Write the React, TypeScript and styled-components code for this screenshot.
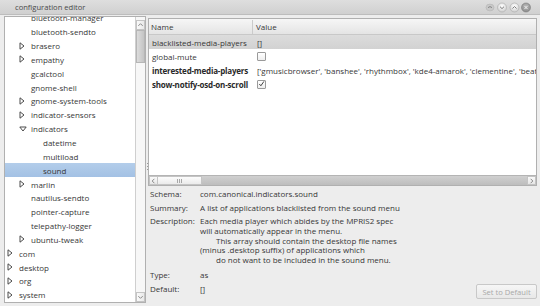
import React from "react";
import styled, { createGlobalStyle } from "styled-components";

const GlobalStyle = createGlobalStyle`
  html, body {
    margin: 0;
    padding: 0;
    background: #ededed;
  }
  body {
    font-family: "Open Sans", "Noto Sans", sans-serif;
    font-size: 8px;
    color: #373737;
  }
`;

type TreeItem = {
  label: string;
  depth: number;
  expander?: "open" | "closed";
  selected?: boolean;
};

const treeItems: TreeItem[] = [
  { label: "bluetooth-manager", depth: 1 },
  { label: "bluetooth-sendto", depth: 1 },
  { label: "brasero", depth: 1, expander: "closed" },
  { label: "empathy", depth: 1, expander: "closed" },
  { label: "gcalctool", depth: 1 },
  { label: "gnome-shell", depth: 1 },
  { label: "gnome-system-tools", depth: 1, expander: "closed" },
  { label: "indicator-sensors", depth: 1, expander: "closed" },
  { label: "indicators", depth: 1, expander: "open" },
  { label: "datetime", depth: 2 },
  { label: "multiload", depth: 2 },
  { label: "sound", depth: 2, selected: true },
  { label: "marlin", depth: 1, expander: "closed" },
  { label: "nautilus-sendto", depth: 1 },
  { label: "pointer-capture", depth: 1 },
  { label: "telepathy-logger", depth: 1 },
  { label: "ubuntu-tweak", depth: 1, expander: "closed" },
  { label: "com", depth: 0, expander: "closed" },
  { label: "desktop", depth: 0, expander: "closed" },
  { label: "org", depth: 0, expander: "closed" },
  { label: "system", depth: 0, expander: "closed" },
];

type KeyRow = {
  name: string;
  bold?: boolean;
  value?: string;
  check?: "on" | "off";
  highlighted?: boolean;
};

const keys: KeyRow[] = [
  { name: "blacklisted-media-players", value: "[]", highlighted: true },
  { name: "global-mute", check: "off" },
  {
    name: "interested-media-players",
    bold: true,
    value:
      "['gmusicbrowser', 'banshee', 'rhythmbox', 'kde4-amarok', 'clementine', 'beatbox', 'guayadeque']",
  },
  { name: "show-notify-osd-on-scroll", bold: true, check: "on" },
];

const description = [
  { text: "Each media player which abides by the MPRIS2 spec", indent: false },
  { text: "will automatically appear in the menu.", indent: false },
  { text: "This array should contain the desktop file names", indent: true },
  { text: "(minus .desktop suffix) of applications which", indent: false },
  { text: "do not want to be included in the sound menu.", indent: true },
];

const Expander = ({ kind }: { kind?: "open" | "closed" }) => (
  <ExpanderBox>
    {kind === "closed" && (
      <svg width="6" height="8" viewBox="0 0 6 8">
        <path d="M1 0.8 L5 4 L1 7.2 Z" fill="#fff" stroke="#4a4a4a" strokeWidth="1" strokeLinejoin="round" />
      </svg>
    )}
    {kind === "open" && (
      <svg width="8" height="6" viewBox="0 0 8 6">
        <path d="M0.8 1 L7.2 1 L4 5 Z" fill="#fff" stroke="#4a4a4a" strokeWidth="1" strokeLinejoin="round" />
      </svg>
    )}
  </ExpanderBox>
);

const Arrow = ({ dir }: { dir: "up" | "down" | "left" | "right" }) => {
  const d = {
    up: "M1.5 5 L4 2.5 L6.5 5",
    down: "M1.5 3 L4 5.5 L6.5 3",
    left: "M5 1.5 L2.5 4 L5 6.5",
    right: "M3 1.5 L5.5 4 L3 6.5",
  }[dir];
  return (
    <svg width="8" height="8" viewBox="0 0 8 8">
      <path d={d} fill="none" stroke="#7a7a7a" strokeWidth="1" />
    </svg>
  );
};

const WindowButtons = () => (
  <svg width="46" height="11" viewBox="0 0 46 11">
    <defs>
      <radialGradient id="wb" cx="50%" cy="35%" r="60%">
        <stop offset="0" stopColor="#ffffff" />
        <stop offset="1" stopColor="#d2d2d2" />
      </radialGradient>
      <radialGradient id="wbd" cx="50%" cy="35%" r="60%">
        <stop offset="0" stopColor="#b8b8b8" />
        <stop offset="1" stopColor="#8e8e8e" />
      </radialGradient>
    </defs>
    <ellipse cx="5" cy="5.5" rx="4" ry="3.4" fill="#c9c9c9" stroke="#b4b4b4" strokeWidth="0.6" />
    <path d="M3 5.6 Q5 3.6 7 5.6" fill="none" stroke="#7d7d7d" strokeWidth="0.9" />
    <circle cx="17" cy="5.5" r="4.5" fill="url(#wb)" stroke="#aaaaaa" strokeWidth="0.6" />
    <path d="M15 4.7 L17 6.6 L19 4.7" fill="none" stroke="#707070" strokeWidth="0.9" />
    <circle cx="29.5" cy="5.5" r="4.5" fill="url(#wb)" stroke="#aaaaaa" strokeWidth="0.6" />
    <path d="M27.5 6.5 L29.5 4.5 L31.5 6.5" fill="none" stroke="#707070" strokeWidth="0.9" />
    <circle cx="41" cy="5.5" r="4.5" fill="url(#wbd)" stroke="#7c7c7c" strokeWidth="0.6" />
    <path d="M39.3 3.8 L42.7 7.2 M42.7 3.8 L39.3 7.2" stroke="#f0f0f0" strokeWidth="1" />
  </svg>
);

const Check = ({ on }: { on: boolean }) => (
  <CheckBox>
    {on && (
      <svg width="8" height="8" viewBox="0 0 8 8">
        <path d="M1.5 4 L3.3 6 L6.8 1" fill="none" stroke="#3a3a3a" strokeWidth="1.1" />
      </svg>
    )}
  </CheckBox>
);

const App = () => {
  return (
    <Window>
      <GlobalStyle />
      <TitleBar>
        <Title>configuration editor</Title>
        <WindowButtons />
      </TitleBar>
      <Body>
        <TreePane>
          <Tree>
            <TreeList>
              {treeItems.map((item) => (
                <TreeRow key={item.label} $depth={item.depth} $selected={item.selected}>
                  <Expander kind={item.expander} />
                  <TreeLabel>{item.label}</TreeLabel>
                </TreeRow>
              ))}
            </TreeList>
          </Tree>
          <VScroll>
            <ScrollButton>
              <Arrow dir="up" />
            </ScrollButton>
            <VThumb />
            <VTrack />
            <ScrollButton>
              <Arrow dir="down" />
            </ScrollButton>
          </VScroll>
        </TreePane>
        <Handle>
          <Grip />
        </Handle>
        <RightPane>
          <ListBox>
            <HeaderRow>
              <NameHeader>Name</NameHeader>
              <ValueHeader>Value</ValueHeader>
            </HeaderRow>
            {keys.map((k) => (
              <KeyLine key={k.name} $highlighted={k.highlighted}>
                <NameCell $bold={k.bold}>{k.name}</NameCell>
                <ValueCell>
                  {k.check ? <Check on={k.check === "on"} /> : k.value}
                </ValueCell>
              </KeyLine>
            ))}
            <ListFill />
            <HScroll>
              <HButton>
                <Arrow dir="left" />
              </HButton>
              <HThumb>
                <ThumbGrip />
              </HThumb>
              <HTrack />
              <HButton>
                <Arrow dir="right" />
              </HButton>
            </HScroll>
          </ListBox>
          <Details>
            <DetailRow>
              <DetailLabel>Schema:</DetailLabel>
              <DetailValue>com.canonical.indicators.sound</DetailValue>
            </DetailRow>
            <DetailRow>
              <DetailLabel>Summary:</DetailLabel>
              <DetailValue>A list of applications blacklisted from the sound menu</DetailValue>
            </DetailRow>
            <DescriptionRow>
              <DetailLabel>Description:</DetailLabel>
              <DescriptionText>
                {description.map((line) => (
                  <DescLine key={line.text} $indent={line.indent}>
                    {line.text}
                  </DescLine>
                ))}
              </DescriptionText>
            </DescriptionRow>
            <DetailRow $gap={3}>
              <DetailLabel>Type:</DetailLabel>
              <DetailValue>as</DetailValue>
            </DetailRow>
            <FooterRow>
              <DetailLabel>Default:</DetailLabel>
              <DetailValue>[]</DetailValue>
              <DefaultButton disabled>Set to Default</DefaultButton>
            </FooterRow>
          </Details>
        </RightPane>
      </Body>
    </Window>
  );
};

const Window = styled.div`
  width: 540px;
  height: 306px;
  display: flex;
  flex-direction: column;
  background: #ededed;
  overflow: hidden;
`;

const TitleBar = styled.div`
  height: 14px;
  flex-shrink: 0;
  display: flex;
  align-items: center;
  padding: 0 9px 0 15px;
  background: linear-gradient(#dedede, #d0d0d0);
  border-bottom: 1px solid #bdbdbd;
  color: #4a4a4a;
  font-size: 7.6px;
`;

const Title = styled.span`
  flex: 1;
`;

const Body = styled.div`
  flex: 1;
  min-height: 0;
  display: flex;
  padding: 1px 3px 3px 4px;
`;

const TreePane = styled.div`
  width: 142px;
  flex-shrink: 0;
  display: flex;
  border: 1px solid #b0b0b0;
  background: #fff;
  box-sizing: border-box;
`;

const Tree = styled.div`
  flex: 1;
  min-width: 0;
  overflow: hidden;
`;

const TreeList = styled.div`
  margin-top: -6px;
`;

const TreeRow = styled.div<{ $depth: number; $selected?: boolean }>`
  height: 13.85px;
  display: flex;
  align-items: center;
  padding-left: ${(p) => p.$depth * 12}px;
  background: ${(p) => (p.$selected ? "linear-gradient(#b3cdea, #a3c1e4)" : "transparent")};
`;

const ExpanderBox = styled.span`
  width: 12px;
  height: 10px;
  flex-shrink: 0;
  display: flex;
  align-items: center;
  padding-left: 2px;
  box-sizing: border-box;
`;

const TreeLabel = styled.span`
  margin-left: 2px;
  white-space: nowrap;
`;

const VScroll = styled.div`
  width: 10px;
  flex-shrink: 0;
  display: flex;
  flex-direction: column;
  border-left: 1px solid #cfcfcf;
  background: #f7f7f7;
  box-sizing: border-box;
`;

const ScrollButton = styled.div`
  height: 10px;
  display: flex;
  align-items: center;
  justify-content: center;
  background: linear-gradient(90deg, #fafafa, #e9e9e9);
  border: 1px solid #c4c4c4;
  margin-top: 3px;
  box-sizing: border-box;
`;

const VThumb = styled.div`
  height: 33px;
  background: linear-gradient(90deg, #dcdcdc, #c4c4c4);
  border: 1px solid #b6b6b6;
  box-sizing: border-box;
`;

const VTrack = styled.div`
  flex: 1;
`;

const Handle = styled.div`
  width: 2px;
  flex-shrink: 0;
  display: flex;
  align-items: center;
  justify-content: center;
`;

const Grip = styled.div`
  width: 1px;
  height: 8px;
  margin-top: 14px;
  background: repeating-linear-gradient(#9a9a9a 0 1px, transparent 1px 3px);
`;

const RightPane = styled.div`
  flex: 1;
  min-width: 0;
  display: flex;
  flex-direction: column;
`;

const ListBox = styled.div`
  height: 168px;
  margin-top: 2px;
  flex-shrink: 0;
  display: flex;
  flex-direction: column;
  background: #fff;
  border: 1px solid #b0b0b0;
  box-sizing: border-box;
  overflow: hidden;
`;

const HeaderRow = styled.div`
  height: 16px;
  flex-shrink: 0;
  display: flex;
  align-items: center;
  background: linear-gradient(#f6f6f6, #e4e4e4);
  border-bottom: 1px solid #c8c8c8;
  box-sizing: border-box;
`;

const NameHeader = styled.div`
  width: 104px;
  padding-left: 2px;
  box-sizing: border-box;
  border-right: 1px solid #cbcbcb;
  line-height: 14px;
`;

const ValueHeader = styled.div`
  padding-left: 3px;
`;

const KeyLine = styled.div<{ $highlighted?: boolean }>`
  height: 14px;
  flex-shrink: 0;
  display: flex;
  align-items: center;
  white-space: nowrap;
  overflow: hidden;
  background: ${(p) => (p.$highlighted ? "linear-gradient(#dcdcdc, #d2d2d2)" : "transparent")};
`;

const NameCell = styled.div<{ $bold?: boolean }>`
  width: 104px;
  flex-shrink: 0;
  padding-left: 3px;
  box-sizing: border-box;
  font-weight: ${(p) => (p.$bold ? 700 : 400)};
  color: ${(p) => (p.$bold ? "#2a2a2a" : "#373737")};
  letter-spacing: ${(p) => (p.$bold ? "-0.2px" : "0")};
  overflow: hidden;
`;

const ValueCell = styled.div`
  padding-left: 4px;
  display: flex;
  align-items: center;
`;

const CheckBox = styled.span`
  width: 7px;
  height: 7px;
  display: flex;
  align-items: center;
  justify-content: center;
  border: 1px solid #9a9a9a;
  border-radius: 1px;
  background: linear-gradient(#ffffff, #eeeeee);
`;

const ListFill = styled.div`
  flex: 1;
`;

const HScroll = styled.div`
  height: 10px;
  flex-shrink: 0;
  display: flex;
  align-items: stretch;
  background: linear-gradient(#d0d0d0, #bdbdbd);
  border-top: 1px solid #b4b4b4;
  box-sizing: border-box;
`;

const HButton = styled.div`
  width: 9px;
  display: flex;
  align-items: center;
  justify-content: center;
  background: linear-gradient(#fafafa, #e6e6e6);
  border: 1px solid #c4c4c4;
  box-sizing: border-box;
`;

const HThumb = styled.div`
  width: 44px;
  display: flex;
  align-items: center;
  justify-content: center;
  background: linear-gradient(#fcfcfc, #ebebeb);
  border: 1px solid #c4c4c4;
  border-left: none;
  box-sizing: border-box;
`;

const ThumbGrip = styled.div`
  width: 5px;
  height: 4px;
  background: repeating-linear-gradient(90deg, #a8a8a8 0 1px, transparent 1px 2px);
`;

const HTrack = styled.div`
  flex: 1;
`;

const Details = styled.div`
  flex: 1;
  display: flex;
  flex-direction: column;
  padding-left: 2px;
`;

const DetailRow = styled.div<{ $gap?: number }>`
  height: 14px;
  display: flex;
  align-items: center;
  margin-top: ${(p) => p.$gap ?? 0}px;
  white-space: nowrap;
`;

const DetailLabel = styled.div`
  width: 50px;
  flex-shrink: 0;
`;

const DetailValue = styled.div``;

const DescriptionRow = styled.div`
  display: flex;
  align-items: flex-start;
  padding-top: 2px;
  line-height: 9.75px;
  white-space: nowrap;
`;

const DescriptionText = styled.div`
  display: flex;
  flex-direction: column;
`;

const DescLine = styled.div<{ $indent: boolean }>`
  padding-left: ${(p) => (p.$indent ? 16 : 0)}px;
`;

const FooterRow = styled.div`
  display: flex;
  align-items: center;
  height: 14px;
`;

const DefaultButton = styled.button`
  margin-left: auto;
  margin-top: 6px;
  width: 61px;
  height: 15px;
  padding: 0;
  font-family: inherit;
  font-size: 7.6px;
  color: #a8a8a8;
  background: linear-gradient(#f6f6f6, #e8e8e8);
  border: 1px solid #c8c8c8;
  border-radius: 2px;
`;

export default App;
